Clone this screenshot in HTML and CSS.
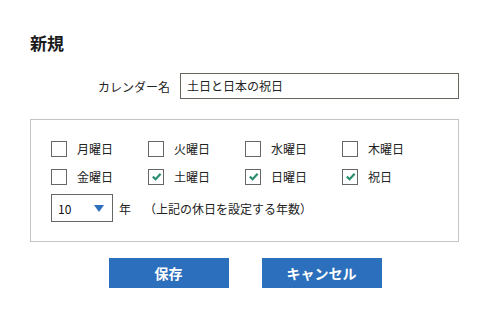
FILE: index.html
```html
<!DOCTYPE html>
<html lang="ja">
<head>
    <meta charset="UTF-8">
    <title>新規</title>
    <link rel="stylesheet" href="styles.css">
</head>
<body>
    <div class="page">
        <h1>新規</h1>

        <div class="name-row">
            <label class="name-label">カレンダー名</label>
            <div class="name-input">土日と日本の祝日</div>
        </div>

        <div class="holiday-box">
            <div class="day-grid">
                <div class="day"><span class="check"></span>月曜日</div>
                <div class="day"><span class="check"></span>火曜日</div>
                <div class="day"><span class="check"></span>水曜日</div>
                <div class="day"><span class="check"></span>木曜日</div>
                <div class="day"><span class="check"></span>金曜日</div>
                <div class="day"><span class="check checked"><svg viewBox="0 0 13 13"><path d="M2.8 6.6 L5.6 9.2 L10.6 3.8" /></svg></span>土曜日</div>
                <div class="day"><span class="check checked"><svg viewBox="0 0 13 13"><path d="M2.8 6.6 L5.6 9.2 L10.6 3.8" /></svg></span>日曜日</div>
                <div class="day"><span class="check checked"><svg viewBox="0 0 13 13"><path d="M2.8 6.6 L5.6 9.2 L10.6 3.8" /></svg></span>祝日</div>
            </div>

            <div class="year-row">
                <div class="year-select">
                    <span>10</span>
                    <span class="arrow"></span>
                </div>
                <span class="year-unit">年</span>
                <span class="year-note">（上記の休日を設定する年数）</span>
            </div>
        </div>

        <div class="buttons">
            <button class="btn">保存</button>
            <button class="btn">キャンセル</button>
        </div>
    </div>
</body>
</html>
```

FILE: styles.css
```css
body {
    margin: 0;
    padding: 0;
    background-color: #fff;
    color: #222;
    font-family: "Noto Sans CJK JP", "Noto Sans", sans-serif;
    font-size: 12px;
}

.page {
    width: 429px;
    padding: 31px 0 0 30px;
}

h1 {
    margin: 0;
    font-size: 17px;
    line-height: 24px;
    font-weight: bold;
    color: #1a1a1a;
}

.name-row {
    display: flex;
    align-items: center;
    margin-top: 18px;
}

.name-label {
    width: 140px;
    text-align: right;
    padding-right: 10px;
}

.name-input {
    box-sizing: border-box;
    width: 279px;
    height: 26px;
    line-height: 24px;
    padding-left: 6px;
    border: 1px solid #66665c;
}

.holiday-box {
    box-sizing: border-box;
    margin-top: 20px;
    height: 123px;
    padding: 21px 20px 0 20px;
    border: 1px solid #c4c4c4;
}

.day-grid {
    display: grid;
    grid-template-columns: repeat(4, 97px);
    row-gap: 13px;
}

.day {
    display: flex;
    align-items: center;
    height: 15px;
    line-height: 15px;
}

.check {
    box-sizing: border-box;
    width: 16px;
    height: 16px;
    margin-right: 10px;
    border: 1px solid #666;
    display: flex;
    align-items: center;
    justify-content: center;
}

.check svg {
    width: 13px;
    height: 13px;
}

.check svg path {
    fill: none;
    stroke: #2a8f70;
    stroke-width: 2.2;
}

.year-row {
    display: flex;
    align-items: center;
    margin-top: 10px;
}

.year-select {
    box-sizing: border-box;
    width: 62px;
    height: 28px;
    border: 1px solid #666;
    padding: 0 8px 0 6px;
    display: flex;
    align-items: center;
    justify-content: space-between;
    color: #111;
}

.arrow {
    width: 0;
    height: 0;
    border-left: 5px solid transparent;
    border-right: 5px solid transparent;
    border-top: 7px solid #2c6fbc;
}

.year-unit {
    margin-left: 6px;
}

.year-note {
    margin-left: 19px;
    font-feature-settings: "halt";
}

.buttons {
    display: flex;
    justify-content: center;
    gap: 33px;
    margin-top: 16px;
    margin-left: -30px;
    width: 490px;
}

.btn {
    width: 120px;
    height: 30px;
    border: none;
    background-color: #2c6fbc;
    color: white;
    font-family: "Noto Sans CJK JP", sans-serif;
    font-size: 14px;
    font-weight: bold;
    cursor: pointer;
}
```
